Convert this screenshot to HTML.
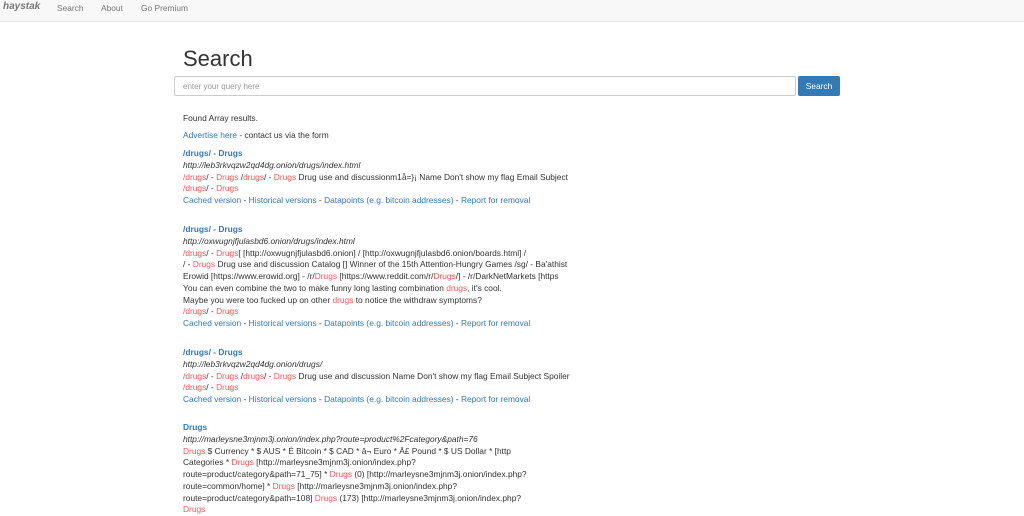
<!DOCTYPE html>
<html><head><meta charset="utf-8"><style>
*{margin:0;padding:0;box-sizing:border-box}
body{width:1024px;height:513px;overflow:hidden;background:#fff;font-family:"Liberation Sans",sans-serif;font-size:8.4px;color:#333;position:relative}
.nav{position:absolute;left:0;top:0;width:1024px;height:22px;background:#f8f8f8;border-bottom:1px solid #e7e7e7}
.nav span{position:absolute;top:2px;color:#777;font-size:8.4px;line-height:12px}
.brand{font-style:italic;font-weight:bold;font-size:10px!important;color:#777}
h1{position:absolute;left:183px;top:46px;font-size:22px;font-weight:normal;color:#333}
.inp{position:absolute;left:174px;top:76px;width:622px;height:20px;border:1px solid #ccc;border-radius:2px;color:#999;font-size:8px;padding:5px 8px}
.btn{position:absolute;left:798px;top:76px;width:42px;height:20px;background:#337ab7;border-radius:2px;color:#fff;font-size:8.4px;text-align:center;line-height:20px}
.c{position:absolute;left:183px;line-height:11.75px;white-space:nowrap}
a{color:#337ab7;text-decoration:none}
.t{font-weight:bold;color:#337ab7}
.u{font-style:italic}
.r{color:#f25a5a}
</style></head><body>
<div class="nav"><span class="brand" style="left:3px;top:1px">haystak</span><span style="left:57px">Search</span><span style="left:101px">About</span><span style="left:141px">Go Premium</span></div>
<h1>Search</h1>
<div class="inp">enter your query here</div>
<div class="btn">Search</div>
<div class="c" style="top:113px">Found Array results.</div>
<div class="c" style="top:130px"><a>Advertise here</a> - contact us via the form</div>
<div class="c" style="top:148px"><div class="t">/drugs/ - Drugs</div><div class="u">http://leb3rkvqzw2qd4dg.onion/drugs/index.html</div>
<div><span class="r">/drugs</span>/ - <span class="r">Drugs</span> /<span class="r">drugs</span>/ - <span class="r">Drugs</span> Drug use and discussionm1å=}¡ Name Don't show my flag Email Subject</div>
<div><span class="r">/drugs</span>/ - <span class="r">Drugs</span></div>
<div><a>Cached version</a> - <a>Historical versions</a> - <a>Datapoints (e.g. bitcoin addresses)</a> - <a>Report for removal</a></div></div>
<div class="c" style="top:224px"><div class="t">/drugs/ - Drugs</div><div class="u">http://oxwugnjfjulasbd6.onion/drugs/index.html</div>
<div><span class="r">/drugs</span>/ - <span class="r">Drugs</span>[ [http://oxwugnjfjulasbd6.onion] / [http://oxwugnjfjulasbd6.onion/boards.html] /</div>
<div>/ - <span class="r">Drugs</span> Drug use and discussion Catalog [] Winner of the 15th Attention-Hungry Games /sg/ - Ba'athist</div>
<div>Erowid [https://www.erowid.org] - /r/<span class="r">Drugs</span> [https://www.reddit.com/r/<span class="r">Drugs</span>/] - /r/DarkNetMarkets [https</div>
<div>You can even combine the two to make funny long lasting combination <span class="r">drugs</span>, it's cool.</div>
<div>Maybe you were too fucked up on other <span class="r">drugs</span> to notice the withdraw symptoms?</div>
<div><span class="r">/drugs</span>/ - <span class="r">Drugs</span></div>
<div><a>Cached version</a> - <a>Historical versions</a> - <a>Datapoints (e.g. bitcoin addresses)</a> - <a>Report for removal</a></div></div>
<div class="c" style="top:347px"><div class="t">/drugs/ - Drugs</div><div class="u">http://leb3rkvqzw2qd4dg.onion/drugs/</div>
<div><span class="r">/drugs</span>/ - <span class="r">Drugs</span> /<span class="r">drugs</span>/ - <span class="r">Drugs</span> Drug use and discussion Name Don't show my flag Email Subject Spoiler</div>
<div><span class="r">/drugs</span>/ - <span class="r">Drugs</span></div>
<div><a>Cached version</a> - <a>Historical versions</a> - <a>Datapoints (e.g. bitcoin addresses)</a> - <a>Report for removal</a></div></div>
<div class="c" style="top:422px"><div class="t">Drugs</div><div class="u">http://marleysne3mjnm3j.onion/index.php?route=product%2Fcategory&amp;path=76</div>
<div><span class="r">Drugs</span> $ Currency * $ AUS * É Bitcoin * $ CAD * â¬ Euro * Â£ Pound * $ US Dollar * [http</div>
<div>Categories * <span class="r">Drugs</span> [http://marleysne3mjnm3j.onion/index.php?</div>
<div>route=product/category&amp;path=71_75] * <span class="r">Drugs</span> (0) [http://marleysne3mjnm3j.onion/index.php?</div>
<div>route=common/home] * <span class="r">Drugs</span> [http://marleysne3mjnm3j.onion/index.php?</div>
<div>route=product/category&amp;path=108] <span class="r">Drugs</span> (173) [http://marleysne3mjnm3j.onion/index.php?</div>
<div><span class="r">Drugs</span></div></div>
</body></html>
